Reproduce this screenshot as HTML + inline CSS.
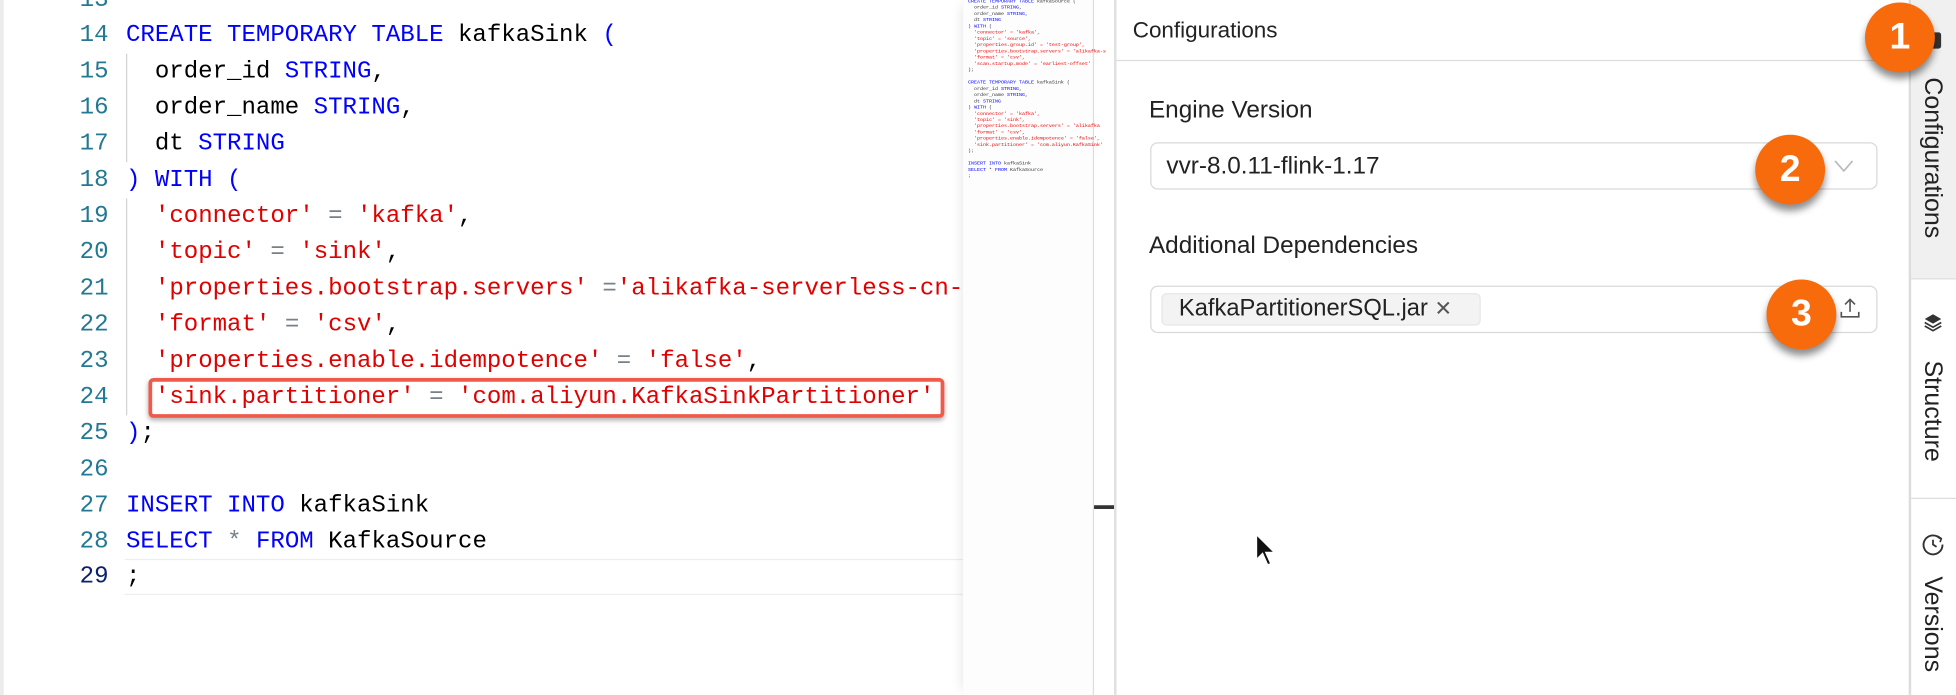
<!DOCTYPE html>
<html><head><meta charset="utf-8"><style>
*{margin:0;padding:0;box-sizing:border-box}
body{width:1956px;height:694px;position:relative;overflow:hidden;background:#fff;font-family:"Liberation Sans",sans-serif}
#w{position:absolute;left:0;top:0;width:1568px;height:557px;transform:scale(1.2475);transform-origin:0 0}
.code{position:absolute;left:0;top:0;width:772px;height:557px;background:#fff;border-left:3px solid #ececec}
.ln{position:absolute;left:0;width:84px;text-align:right;font:19.3px/29px "Liberation Mono",monospace;color:#237893}
.tx{position:absolute;left:98px;font:19.3px/29px "Liberation Mono",monospace;color:#000;white-space:pre}
.k{color:#0000ff}.s{color:#e00000}.o{color:#7a8088}
.guide{position:absolute;left:98px;width:1px;background:#d3d3d3}
.mini{position:absolute;left:772px;top:0;width:105px;height:557px;background:#fdfdfd;border-right:1px solid #ddd;box-shadow:-6px 0 8px -4px rgba(0,0,0,.08)}
.panel{position:absolute;left:893px;top:0;width:637px;height:557px;background:#fff;border-left:2px solid #e0e0e0}
.tabs{position:absolute;left:1530px;top:0;width:38px;height:557px;background:#fff;border-left:2px solid #dcdcdc}
.vt{position:absolute;writing-mode:vertical-rl;font-size:20px;color:#222}
.badge{position:absolute;width:56px;height:56px;border-radius:50%;background:#f76b0c;color:#fff;font:bold 30px/56px "Liberation Sans",sans-serif;text-align:center;box-shadow:0 5px 6px rgba(0,0,0,.45)}
.lbl{position:absolute;left:26px;font-size:19.5px;color:#222}
</style></head><body><div id="w">
<div class="code">
<div class="ln" style="top:-14px">13</div>
<div class="ln" style="top:14px">14</div><div class="tx" style="top:14px"><span class="k">CREATE TEMPORARY TABLE</span> kafkaSink <span class="k">(</span></div>
<div class="ln" style="top:43px">15</div><div class="tx" style="top:43px">  order_id <span class="k">STRING</span>,</div>
<div class="ln" style="top:72px">16</div><div class="tx" style="top:72px">  order_name <span class="k">STRING</span>,</div>
<div class="ln" style="top:101px">17</div><div class="tx" style="top:101px">  dt <span class="k">STRING</span></div>
<div class="ln" style="top:130px">18</div><div class="tx" style="top:130px"><span class="k">) WITH (</span></div>
<div class="ln" style="top:159px">19</div><div class="tx" style="top:159px">  <span class="s">'connector'</span> <span class="o">=</span> <span class="s">'kafka'</span>,</div>
<div class="ln" style="top:188px">20</div><div class="tx" style="top:188px">  <span class="s">'topic'</span> <span class="o">=</span> <span class="s">'sink'</span>,</div>
<div class="ln" style="top:217px">21</div><div class="tx" style="top:217px">  <span class="s">'properties.bootstrap.servers'</span> <span class="o">=</span><span class="s">'alikafka-serverless-cn-</span></div>
<div class="ln" style="top:246px">22</div><div class="tx" style="top:246px">  <span class="s">'format'</span> <span class="o">=</span> <span class="s">'csv'</span>,</div>
<div class="ln" style="top:275px">23</div><div class="tx" style="top:275px">  <span class="s">'properties.enable.idempotence'</span> <span class="o">=</span> <span class="s">'false'</span>,</div>
<div class="ln" style="top:304px">24</div><div class="tx" style="top:304px">  <span class="s">'sink.partitioner'</span> <span class="o">=</span> <span class="s">'com.aliyun.KafkaSinkPartitioner'</span></div>
<div class="ln" style="top:333px">25</div><div class="tx" style="top:333px"><span class="k">)</span>;</div>
<div class="ln" style="top:362px">26</div>
<div class="ln" style="top:391px">27</div><div class="tx" style="top:391px"><span class="k">INSERT INTO</span> kafkaSink</div>
<div class="ln" style="top:420px">28</div><div class="tx" style="top:420px"><span class="k">SELECT</span> <span class="o">*</span> <span class="k">FROM</span> KafkaSource</div>
<div style="position:absolute;left:97px;top:448px;width:675px;height:29px;border-top:1px solid #eee;border-bottom:1px solid #eee"></div>
<div class="ln" style="top:448px;color:#0b216f">29</div><div class="tx" style="top:448px">;</div>
<div class="guide" style="top:43px;height:87px"></div>
<div class="guide" style="top:159px;height:174px"></div>
<div style="position:absolute;left:116px;top:303px;width:638px;height:32px;border:3px solid #f05a4a;border-radius:4px;box-shadow:0 2px 4px rgba(0,0,0,.3)"></div>
</div>
<div class="mini">
<div style="position:absolute;left:4px;top:0;width:100px;font:4px/5px 'Liberation Mono',monospace;color:#333;white-space:pre"><span style="color:#00f">CREATE TEMPORARY TABLE</span> kafkaSource (
  order_id <span style="color:#00f">STRING</span>,
  order_name <span style="color:#00f">STRING</span>,
  dt <span style="color:#00f">STRING</span>
) <span style="color:#00f">WITH</span> (
  <span style="color:#e00">'connector' = 'kafka',</span>
  <span style="color:#e00">'topic' = 'source',</span>
  <span style="color:#e00">'properties.group.id' = 'test-group',</span>
  <span style="color:#e00">'properties.bootstrap.servers' = 'alikafka-s</span>
  <span style="color:#e00">'format' = 'csv',</span>
  <span style="color:#e00">'scan.startup.mode' = 'earliest-offset'</span>
);

<span style="color:#00f">CREATE TEMPORARY TABLE</span> kafkaSink (
  order_id <span style="color:#00f">STRING</span>,
  order_name <span style="color:#00f">STRING</span>,
  dt <span style="color:#00f">STRING</span>
) <span style="color:#00f">WITH</span> (
  <span style="color:#e00">'connector' = 'kafka',</span>
  <span style="color:#e00">'topic' = 'sink',</span>
  <span style="color:#e00">'properties.bootstrap.servers' = 'alikafka</span>
  <span style="color:#e00">'format' = 'csv',</span>
  <span style="color:#e00">'properties.enable.idempotence' = 'false',</span>
  <span style="color:#e00">'sink.partitioner' = 'com.aliyun.KafkaSink'</span>
);

<span style="color:#00f">INSERT INTO</span> kafkaSink
<span style="color:#00f">SELECT</span> * <span style="color:#00f">FROM</span> KafkaSource
;</div>
</div>
<div style="position:absolute;left:877px;top:405px;width:16px;height:3px;background:#333"></div>
<div class="panel">
<div style="position:absolute;left:13px;top:14px;font-size:18px;color:#222">Configurations</div>
<div style="position:absolute;left:0;top:48px;width:635px;height:1px;background:#ddd"></div>
<div class="lbl" style="top:77px">Engine Version</div>
<div style="position:absolute;left:27px;top:114px;width:583px;height:38px;border:1px solid #d9d9d9;border-radius:6px">
<div style="position:absolute;left:12px;top:7px;font-size:19.5px;color:#222">vvr-8.0.11-flink-1.17</div>
<svg style="position:absolute;right:18px;top:12px" width="16" height="12" viewBox="0 0 16 12"><path d="M1 2l7 8 7-8" fill="none" stroke="#bbb" stroke-width="1.4"/></svg>
</div>
<div class="lbl" style="top:186px">Additional Dependencies</div>
<div style="position:absolute;left:27px;top:229px;width:583px;height:38px;border:1px solid #d9d9d9;border-radius:6px">
<div style="position:absolute;left:8px;top:5px;height:26px;width:256px;background:#f3f3f3;border:1px solid #e6e6e6;border-radius:4px;font-size:19px;line-height:24px;color:#222;padding-left:13px">KafkaPartitionerSQL.jar <span style="color:#555;font-size:17px">✕</span></div>
<svg style="position:absolute;right:12px;top:8px" width="18" height="18" viewBox="0 0 18 18"><path d="M9 2v10M5 6l4-4 4 4M2 12v4h14v-4" fill="none" stroke="#555" stroke-width="1.3"/></svg>
</div>
</div>
<div class="tabs">
<div style="position:absolute;left:0;top:0;width:38px;height:223px;background:#f0f0f0"></div>
<div style="position:absolute;left:0;top:223px;width:38px;height:1px;background:#ddd"></div>
<div style="position:absolute;left:0;top:399px;width:38px;height:1px;background:#ddd"></div>
<div style="position:absolute;left:13px;top:26px;width:11px;height:13px;background:#333;border-radius:2px"></div>
<div class="vt" style="left:5px;top:62px">Configurations</div>
<svg style="position:absolute;left:9px;top:250px" width="17" height="17" viewBox="0 0 18 18"><path d="M9 2l7 4-7 4-7-4z" fill="#333"/><path d="M2 9l7 4 7-4M2 12l7 4 7-4" fill="none" stroke="#333" stroke-width="1.4"/></svg>
<div class="vt" style="left:5px;top:289px">Structure</div>
<svg style="position:absolute;left:8px;top:427px" width="19" height="19" viewBox="0 0 20 20"><path d="M16 5A8 8 0 1 0 18 10" fill="none" stroke="#333" stroke-width="1.6"/><path d="M14 3l3 2-1 3" fill="none" stroke="#333" stroke-width="1.4"/><path d="M10 6v4l3 2" fill="none" stroke="#333" stroke-width="1.5"/></svg>
<div class="vt" style="left:5px;top:462px">Versions</div>
</div>
<div class="badge" style="left:1495px;top:2px">1</div>
<div class="badge" style="left:1407px;top:108px">2</div>
<div class="badge" style="left:1416px;top:224px">3</div>
<svg style="position:absolute;left:1005px;top:426px" width="20" height="30" viewBox="0 0 20 30"><path d="M2 2v21l5-5 4 9 3-1-4-9h7z" fill="#111" stroke="#fff" stroke-width="1.5"/></svg>
</div></body></html>
